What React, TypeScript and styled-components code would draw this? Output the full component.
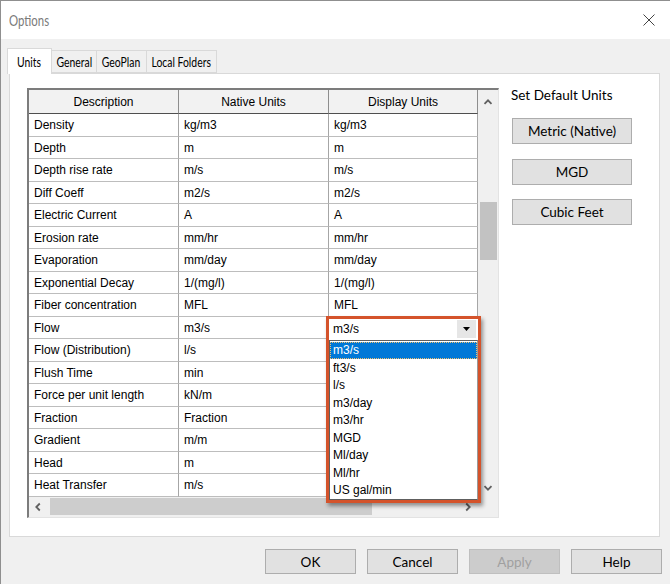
import React from 'react';
import styled, { createGlobalStyle } from 'styled-components';

const uiFont = `"Segoe UI", Lato, "Open Sans", sans-serif`;
const gridFont = `"Liberation Sans", Arial, sans-serif`;

const GlobalStyle = createGlobalStyle`
  html, body {
    margin: 0;
    padding: 0;
    background: #f0f0f0;
  }
  body {
    width: 670px;
    height: 584px;
    overflow: hidden;
  }
`;

const Window = styled.div`
  width: 670px;
  height: 584px;
  box-sizing: border-box;
  border-top: 1px solid #8f8f8f;
  border-left: 1px solid #8f8f8f;
  background: #f0f0f0;
  display: flex;
  flex-direction: column;
  font-family: ${uiFont};
`;

const TitleBar = styled.div`
  height: 38px;
  flex: 0 0 38px;
  background: #fff;
  display: flex;
  align-items: center;
  justify-content: space-between;
  padding: 0 15px 0 8px;
  font-size: 15px;
  color: #7a7a7a;
`;

// Segoe UI on the original renders narrower than any font we have
const Condensed = styled.span<{ $scale: number }>`
  display: inline-block;
  transform: scaleX(${(p) => p.$scale});
  transform-origin: ${(p) => (p.$scale < 0.78 ? 'left' : 'center')} center;
  white-space: nowrap;
`;

const Body = styled.div`
  flex: 1;
  display: flex;
  flex-direction: column;
  padding: 9px 0 0 8px;
`;

const TabStrip = styled.div`
  display: flex;
  align-items: flex-end;
  height: 25px;
  margin-left: -2px;
`;

const Tab = styled.div<{ $active?: boolean; $w: number }>`
  box-sizing: border-box;
  width: ${(p) => p.$w}px;
  height: ${(p) => (p.$active ? 26 : 23)}px;
  margin-bottom: ${(p) => (p.$active ? -1 : 0)}px;
  position: relative;
  z-index: ${(p) => (p.$active ? 2 : 1)};
  background: ${(p) => (p.$active ? '#fff' : '#f0f0f0')};
  border: 1px solid #d9d9d9;
  border-bottom: ${(p) => (p.$active ? 'none' : '1px solid #d9d9d9')};
  margin-left: ${(p) => (p.$active ? 0 : -1)}px;
  display: flex;
  align-items: center;
  justify-content: center;
  padding-top: ${(p) => (p.$active ? 0 : 1)}px;
  font-size: 13px;
  color: #000;
`;

const Panel = styled.div`
  box-sizing: border-box;
  width: 651px;
  height: 464px;
  background: #fff;
  border: 1px solid #d9d9d9;
  display: flex;
  padding: 14px 0 0 17px;
`;

const GridFrame = styled.div`
  display: grid;
  grid-template-columns: 449px 20px;
  grid-template-rows: 406px 21px;
  box-sizing: border-box;
  width: 472px;
  height: 430px;
  border-top: 2px solid #7c7c7c;
  border-left: 2px solid #7c7c7c;
  border-right: 1px solid #e3e3e3;
  border-bottom: 1px solid #e3e3e3;
  background: #f0f0f0;
  font-family: ${gridFont};
  font-size: 12px;
  color: #000;
`;

const Table = styled.div`
  background: #fff;
  display: flex;
  flex-direction: column;
`;

const Row = styled.div<{ $header?: boolean }>`
  display: grid;
  grid-template-columns: 150px 150px 149px;
  height: ${(p) => (p.$header ? 24 : 22.5)}px;
  flex: 0 0 auto;
`;

const HeadCell = styled.div`
  box-sizing: border-box;
  background: #f2f2f2;
  border-right: 1px solid #8e8e8e;
  border-bottom: 1px solid #4f4f4f;
  display: flex;
  align-items: center;
  justify-content: center;
  padding-top: 1px;
`;

const Cell = styled.div`
  position: relative;
  box-sizing: border-box;
  border-right: 1px solid #a6a6a6;
  border-bottom: 1px solid #bdbdbd;
  display: flex;
  align-items: center;
  padding-left: 5px;
  padding-top: 1px;
  white-space: nowrap;
`;

const VScroll = styled.div`
  display: flex;
  flex-direction: column;
  background: #f0f0f0;
`;

const ArrowBox = styled.div<{ $h: number }>`
  height: ${(p) => p.$h}px;
  flex: 0 0 auto;
  display: flex;
  align-items: center;
  justify-content: center;
`;

const VTrack = styled.div`
  flex: 1;
  display: flex;
  flex-direction: column;
  align-items: center;
`;

const VThumb = styled.div<{ $offset: number; $size: number }>`
  margin-top: ${(p) => p.$offset}px;
  width: 17px;
  height: ${(p) => p.$size}px;
  background: #c2c2c2;
`;

const HScroll = styled.div`
  display: flex;
  align-items: center;
  background: #f0f0f0;
`;

const HArrow = styled.div<{ $w: number }>`
  width: ${(p) => p.$w}px;
  height: 100%;
  display: flex;
  align-items: center;
  justify-content: center;
`;

const HTrack = styled.div`
  flex: 1;
  height: 100%;
  display: flex;
  align-items: center;
`;

const HThumb = styled.div<{ $offset: number; $size: number }>`
  margin-left: ${(p) => p.$offset}px;
  width: ${(p) => p.$size}px;
  height: 17px;
  background: #cdcdcd;
`;

const Corner = styled.div`
  background: #f0f0f0;
`;

const Callout = styled.div`
  position: absolute;
  left: -3px;
  top: -1px;
  z-index: 5;
  box-sizing: border-box;
  width: 155px;
  height: 187px;
  border: 3px solid #d4532b;
  background: #fff;
  box-shadow: 2px 3px 4px rgba(0, 0, 0, 0.4);
  display: flex;
  flex-direction: column;
`;

const Combo = styled.div`
  height: 21px;
  flex: 0 0 21px;
  display: flex;
  align-items: center;
  padding-left: 4px;
  padding-right: 2px;
`;

const ComboText = styled.span`
  flex: 1;
`;

const ComboButton = styled.div`
  width: 19px;
  height: 18px;
  background: #e6e6e6;
  display: flex;
  align-items: center;
  justify-content: center;
`;

const List = styled.div`
  flex: 1;
  border: 1px solid #5e5e5e;
  border-right-color: #9a9a9a;
  padding: 1px 0 0 0;
  display: flex;
  flex-direction: column;
`;

const Item = styled.div<{ $selected?: boolean }>`
  height: 17.5px;
  flex: 0 0 17.5px;
  box-sizing: border-box;
  display: flex;
  align-items: center;
  padding-left: 3px;
  background: ${(p) => (p.$selected ? '#0078d7' : 'transparent')};
  color: ${(p) => (p.$selected ? '#fff' : '#000')};
  outline: ${(p) => (p.$selected ? '1px dotted #f0c070' : 'none')};
  outline-offset: -1px;
`;

const Side = styled.div`
  margin-left: 12px;
  display: flex;
  flex-direction: column;
  gap: 14.5px;
`;

const SideLabel = styled.div`
  font-size: 13.5px;
  line-height: 14px;
  color: #000;
  margin-bottom: 1.5px;
`;

const WinButton = styled.button<{ $w: number; $h: number; $disabled?: boolean }>`
  box-sizing: border-box;
  width: ${(p) => p.$w}px;
  height: ${(p) => p.$h}px;
  margin: 0;
  padding: 0;
  font-family: ${uiFont};
  font-size: 13.5px;
  color: ${(p) => (p.$disabled ? '#a0a0a0' : '#000')};
  background: ${(p) => (p.$disabled ? '#cccccc' : '#e1e1e1')};
  border: 1px solid ${(p) => (p.$disabled ? '#bfbfbf' : '#adadad')};
`;

const SideButton = styled(WinButton)`
  margin-left: 1px;
`;

const Footer = styled.div`
  display: flex;
  justify-content: flex-end;
  gap: 11px;
  padding: 12px 8px 0 0;
`;

type UnitRow = [string, string, string];

const rows: UnitRow[] = [
  ['Density', 'kg/m3', 'kg/m3'],
  ['Depth', 'm', 'm'],
  ['Depth rise rate', 'm/s', 'm/s'],
  ['Diff Coeff', 'm2/s', 'm2/s'],
  ['Electric Current', 'A', 'A'],
  ['Erosion rate', 'mm/hr', 'mm/hr'],
  ['Evaporation', 'mm/day', 'mm/day'],
  ['Exponential Decay', '1/(mg/l)', '1/(mg/l)'],
  ['Fiber concentration', 'MFL', 'MFL'],
  ['Flow', 'm3/s', 'm3/s'],
  ['Flow (Distribution)', 'l/s', 'l/s'],
  ['Flush Time', 'min', 'min'],
  ['Force per unit length', 'kN/m', 'kN/m'],
  ['Fraction', 'Fraction', 'Fraction'],
  ['Gradient', 'm/m', 'm/m'],
  ['Head', 'm', 'm'],
  ['Heat Transfer', 'm/s', 'm/s'],
];

// the open list covers the display column from this row down
const dropdownRow = 9;

const flowOptions = ['m3/s', 'ft3/s', 'l/s', 'm3/day', 'm3/hr', 'MGD', 'Ml/day', 'Ml/hr', 'US gal/min'];

const tabs: { label: string; w: number }[] = [
  { label: 'Units', w: 45 },
  { label: 'General', w: 46 },
  { label: 'GeoPlan', w: 51 },
  { label: 'Local Folders', w: 71 },
];

function Chevron({ dir }: { dir: 'up' | 'down' | 'left' | 'right' }) {
  const rot = { up: 0, right: 90, down: 180, left: 270 }[dir];
  return (
    <svg width="10" height="10" viewBox="0 0 10 10" style={{ transform: `rotate(${rot}deg)` }}>
      <path d="M1.5 6.8 L5 3.3 L8.5 6.8" fill="none" stroke="#606060" strokeWidth="1.8" />
    </svg>
  );
}

function FlowDropdown() {
  return (
    <Callout>
      <Combo>
        <ComboText>m3/s</ComboText>
        <ComboButton>
          <svg width="7" height="4" viewBox="0 0 7 4">
            <path d="M0 0 H7 L3.5 4 Z" fill="#000" />
          </svg>
        </ComboButton>
      </Combo>
      <List>
        {flowOptions.map((o, i) => (
          <Item key={o} $selected={i === 0}>
            {o}
          </Item>
        ))}
      </List>
    </Callout>
  );
}

function UnitsGrid() {
  return (
    <GridFrame>
      <Table>
        <Row $header>
          <HeadCell>Description</HeadCell>
          <HeadCell>Native Units</HeadCell>
          <HeadCell>Display Units</HeadCell>
        </Row>
        {rows.map(([desc, native, display], i) => (
          <Row key={desc}>
            <Cell>{desc}</Cell>
            <Cell>{native}</Cell>
            <Cell>
              {i < dropdownRow && display}
              {i === dropdownRow && <FlowDropdown />}
            </Cell>
          </Row>
        ))}
      </Table>
      <VScroll>
        <ArrowBox $h={24}>
          <Chevron dir="up" />
        </ArrowBox>
        <VTrack>
          <VThumb $offset={88} $size={58} />
        </VTrack>
        <ArrowBox $h={17}>
          <Chevron dir="down" />
        </ArrowBox>
      </VScroll>
      <HScroll>
        <HArrow $w={18}>
          <Chevron dir="left" />
        </HArrow>
        <HTrack>
          <HThumb $offset={3} $size={322} />
        </HTrack>
        <HArrow $w={21}>
          <Chevron dir="right" />
        </HArrow>
      </HScroll>
      <Corner />
    </GridFrame>
  );
}

export default function App() {
  return (
    <>
      <GlobalStyle />
      <Window>
        <TitleBar>
          <Condensed $scale={0.76}>Options</Condensed>
          <svg width="12" height="12" viewBox="0 0 12 12">
            <path d="M0.5 0.5 L11.5 11.5 M11.5 0.5 L0.5 11.5" stroke="#444" strokeWidth="1" />
          </svg>
        </TitleBar>
        <Body>
          <TabStrip>
            {tabs.map((t, i) => (
              <Tab key={t.label} $active={i === 0} $w={t.w}>
                <Condensed $scale={0.8}>{t.label}</Condensed>
              </Tab>
            ))}
          </TabStrip>
          <Panel>
            <UnitsGrid />
            <Side>
              <SideLabel>Set Default Units</SideLabel>
              <SideButton $w={120} $h={26}>Metric (Native)</SideButton>
              <SideButton $w={120} $h={26}>MGD</SideButton>
              <SideButton $w={120} $h={26}>Cubic Feet</SideButton>
            </Side>
          </Panel>
          <Footer>
            <WinButton $w={91} $h={25}>OK</WinButton>
            <WinButton $w={91} $h={25}>Cancel</WinButton>
            <WinButton $w={91} $h={25} $disabled>Apply</WinButton>
            <WinButton $w={91} $h={25}>Help</WinButton>
          </Footer>
        </Body>
      </Window>
    </>
  );
}
